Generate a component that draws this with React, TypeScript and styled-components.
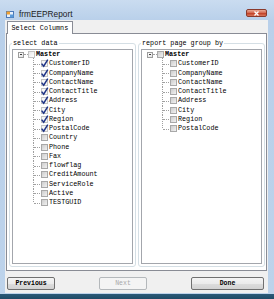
import React from 'react';
import styled, { createGlobalStyle } from 'styled-components';

const Global = createGlobalStyle`
  html, body { margin: 0; padding: 0; background: #fff; }
  body { width: 274px; height: 299px; overflow: hidden; }
`;

const mono = `"Liberation Mono", "DejaVu Sans Mono", monospace`;

const Window = styled.div`
  width: 274px;
  height: 299px;
  display: flex;
  flex-direction: column;
  background: linear-gradient(#cadcf0, #b9d0ea 20px, #bdd3eb);
`;

const TitleBar = styled.div`
  height: 20px;
  flex: none;
  box-sizing: border-box;
  display: flex;
  align-items: center;
  padding: 8px 7px 0 6px;
`;

const TitleText = styled.span`
  margin-left: 5px;
  font-family: "Liberation Sans", Arial, sans-serif;
  font-size: 8.3px;
  line-height: 10px;
  color: #1b1b1b;
`;

const CloseButton = styled.div`
  margin-left: auto;
  align-self: flex-start;
  margin-top: 1px;
  width: 21px;
  height: 8px;
  border: 1px solid #8a3a2c;
  border-radius: 2px;
  box-sizing: border-box;
  background: linear-gradient(#e9a995, #d2644c 50%, #c03c22 51%, #d8765c);
  display: flex;
  align-items: center;
  justify-content: center;
`;

const Body = styled.div`
  flex: 1;
  display: flex;
  padding: 0 6px 0 5px;
  min-height: 0;
`;

const Client = styled.div`
  flex: 1;
  display: flex;
  flex-direction: column;
  background: #f0f0f0;
  min-width: 0;
`;

const BottomEdge = styled.div`
  height: 6px;
  flex: none;
  background: linear-gradient(#bdd3eb 0 1px, #2b5a78 1px, #1f4a66);
`;

const TabStrip = styled.div`
  height: 13px;
  flex: none;
  display: flex;
  align-items: flex-end;
  padding-left: 2px;
`;

const Tab = styled.div`
  position: relative;
  z-index: 1;
  height: 13px;
  margin-bottom: -1px;
  box-sizing: border-box;
  padding: 0 3.5px;
  border: 1px solid #898c95;
  border-bottom: none;
  background: #fff;
  font-family: ${mono};
  font-size: 6.75px;
  line-height: 12px;
  color: #000;
`;

const Panel = styled.div`
  flex: 1;
  margin: 0 1px;
  border: 1px solid #898c95;
  background: #fff;
  box-sizing: border-box;
  padding: 5px 1px 3px 2px;
  display: grid;
  grid-template-columns: 1fr 1fr;
  gap: 2px;
  min-height: 0;
`;

const Group = styled.fieldset`
  margin: 0;
  min-width: 0;
  padding: 2px 2px 2px 2px;
  border: 1px solid #d5dfe5;
  border-radius: 3px;
  display: flex;
  flex-direction: column;
`;

const Legend = styled.legend`
  padding: 0 1px;
  font-family: ${mono};
  font-size: 6.75px;
  line-height: 8px;
  color: #000;
`;

const Tree = styled.div`
  flex: 1;
  border: 1px solid #a3a6ac;
  background: #fff;
  overflow: hidden;
`;

const Row = styled.div<{ $root?: boolean }>`
  height: 9.25px;
  display: flex;
  align-items: center;
  padding-left: ${(p) => (p.$root ? '5px' : '0')};
  font-family: ${mono};
  font-size: 6.75px;
  color: #000;
  white-space: nowrap;
`;

const Label = styled.span<{ $bold?: boolean }>`
  margin-left: 1px;
  line-height: 9px;
  font-weight: ${(p) => (p.$bold ? 700 : 400)};
`;

const ExpandBox = styled.span`
  position: relative;
  width: 6px;
  height: 6px;
  flex: none;
  box-sizing: border-box;
  border: 1px solid #9c9c9c;
  background: linear-gradient(135deg, #ffffff, #e2e2e2);
  &::after {
    content: '';
    position: absolute;
    left: 1px;
    right: 1px;
    top: 1.5px;
    height: 1px;
    background: #3a3a3a;
  }
`;

const Stub = styled.span`
  width: 4px;
  flex: none;
  border-top: 1px dotted #a0a0a0;
`;

const Connector = styled.span<{ $last?: boolean }>`
  position: relative;
  width: 28px;
  height: 100%;
  flex: none;
  &::before {
    content: '';
    position: absolute;
    left: 20px;
    top: -1px;
    height: ${(p) => (p.$last ? '55%' : 'calc(100% + 1px)')};
    border-left: 1px dotted #a0a0a0;
  }
  &::after {
    content: '';
    position: absolute;
    left: 21px;
    top: 50%;
    width: 6px;
    border-top: 1px dotted #a0a0a0;
  }
`;

type BoxKind = 'checked' | 'plain' | 'empty';

const Box = styled.span<{ $kind: BoxKind }>`
  width: 7px;
  height: 7px;
  flex: none;
  box-sizing: border-box;
  border: 1px solid ${(p) => (p.$kind === 'empty' ? '#a8a8a8' : '#c4c4c4')};
  background: ${(p) =>
    p.$kind === 'empty'
      ? 'linear-gradient(135deg, #cdcdcd, #f1f1f1)'
      : p.$kind === 'plain'
      ? 'linear-gradient(135deg, #e8e8e8, #ffffff)'
      : '#f6f6f6'};
  display: flex;
  align-items: center;
  justify-content: center;
  overflow: visible;
`;

const ButtonRow = styled.div`
  height: 13px;
  flex: none;
  margin: 6px 0 3px;
  padding: 0 4px 0 2px;
  display: flex;
  align-items: stretch;
`;

const Button = styled.button<{ $w: number; $push?: boolean }>`
  width: ${(p) => p.$w}px;
  margin-left: ${(p) => (p.$push ? 'auto' : '0')};
  padding: 0;
  box-sizing: border-box;
  border: 1px solid #707070;
  border-radius: 2px;
  background: linear-gradient(#f4f4f4, #ebebeb 50%, #dddddd 51%, #d2d2d2);
  font-family: ${mono};
  font-size: 6.5px;
  font-weight: 700;
  color: #000;
  line-height: 11px;
  & + & {
    margin-left: ${(p) => (p.$push ? 'auto' : '7px')};
  }
  &:disabled {
    border-color: #b4b8bb;
    background: #f4f4f4;
    color: #a8a8a8;
    font-weight: 400;
  }
`;

const Check = () => (
  <svg width="7" height="7" viewBox="0 0 7 7" style={{ overflow: 'visible' }}>
    <path d="M0.6 3.6 L2.7 6.2 L6.8 -0.4" fill="none" stroke="#1f3486" strokeWidth="1.5" />
  </svg>
);

const AppIcon = () => (
  <svg width="8" height="7" viewBox="0 0 8 7">
    <rect x="0.5" y="0.5" width="7" height="6" fill="#e9f1fb" stroke="#4a78b8" />
    <rect x="0.5" y="0.5" width="3.5" height="3" fill="#f0a030" />
    <rect x="4" y="3.5" width="3.5" height="3" fill="#5a9ad8" />
  </svg>
);

const CloseX = () => (
  <svg width="7" height="5" viewBox="0 0 7 5">
    <path d="M1.5 0.5 L5.5 4.5 M5.5 0.5 L1.5 4.5" stroke="#fff" strokeWidth="1.3" />
  </svg>
);

type Field = { name: string; checked: boolean };

const leftFields: Field[] = [
  { name: 'CustomerID', checked: true },
  { name: 'CompanyName', checked: true },
  { name: 'ContactName', checked: true },
  { name: 'ContactTitle', checked: true },
  { name: 'Address', checked: true },
  { name: 'City', checked: true },
  { name: 'Region', checked: true },
  { name: 'PostalCode', checked: true },
  { name: 'Country', checked: false },
  { name: 'Phone', checked: false },
  { name: 'Fax', checked: false },
  { name: 'flowflag', checked: false },
  { name: 'CreditAmount', checked: false },
  { name: 'ServiceRole', checked: false },
  { name: 'Active', checked: false },
  { name: 'TESTGUID', checked: false },
];

const rightFields: Field[] = [
  'CustomerID',
  'CompanyName',
  'ContactName',
  'ContactTitle',
  'Address',
  'City',
  'Region',
  'PostalCode',
].map((name) => ({ name, checked: false }));

const FieldTree = ({ rootKind, fields }: { rootKind: BoxKind; fields: Field[] }) => (
  <Tree>
    <Row $root>
      <ExpandBox />
      <Stub />
      <Box $kind={rootKind} />
      <Label $bold>Master</Label>
    </Row>
    {fields.map((f, i) => (
      <Row key={f.name}>
        <Connector $last={i === fields.length - 1} />
        <Box $kind={f.checked ? 'checked' : 'empty'}>{f.checked && <Check />}</Box>
        <Label>{f.name}</Label>
      </Row>
    ))}
  </Tree>
);

export default function App() {
  return (
    <>
      <Global />
      <Window>
        <TitleBar>
          <AppIcon />
          <TitleText>frmEEPReport</TitleText>
          <CloseButton>
            <CloseX />
          </CloseButton>
        </TitleBar>
        <Body>
          <Client>
            <TabStrip>
              <Tab>Select Columns</Tab>
            </TabStrip>
            <Panel>
              <Group>
                <Legend>select data</Legend>
                <FieldTree rootKind="plain" fields={leftFields} />
              </Group>
              <Group>
                <Legend>report page group by</Legend>
                <FieldTree rootKind="empty" fields={rightFields} />
              </Group>
            </Panel>
            <ButtonRow>
              <Button $w={48}>Previous</Button>
              <Button $w={48} disabled>
                Next
              </Button>
              <Button $w={73} $push>
                Done
              </Button>
            </ButtonRow>
          </Client>
        </Body>
        <BottomEdge />
      </Window>
    </>
  );
}
